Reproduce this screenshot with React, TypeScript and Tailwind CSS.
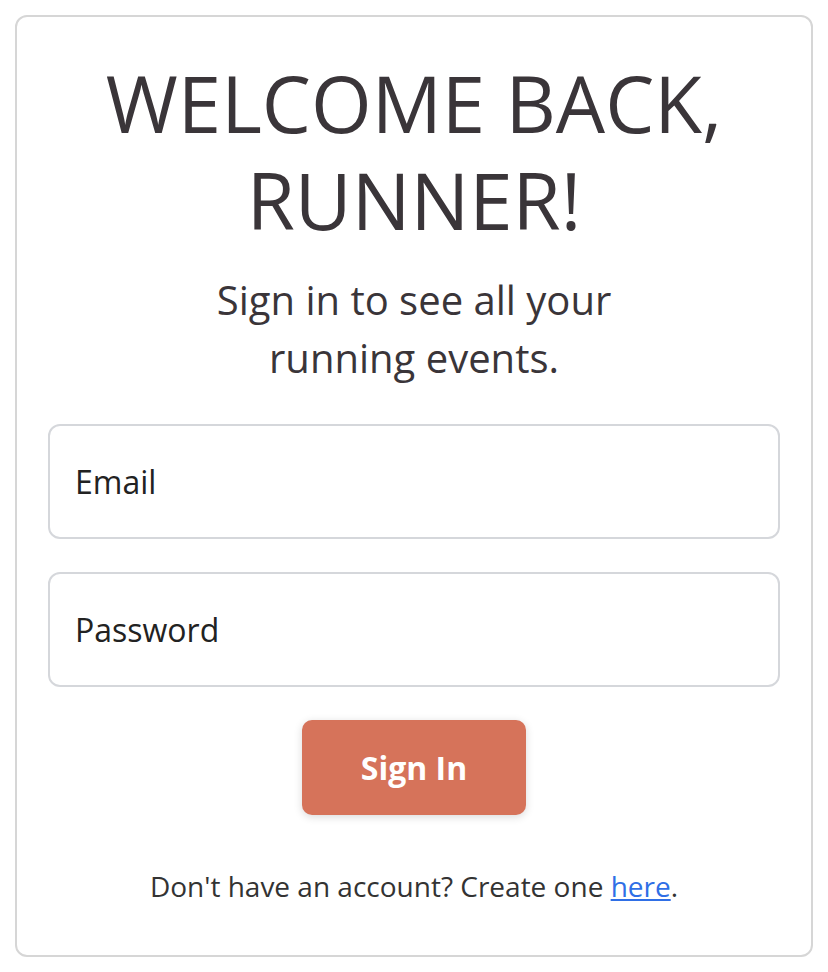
export default function App() {
  return (
    <div className="min-h-screen bg-white p-[15px]" style={{ fontFamily: '"Open Sans", "Noto Sans", sans-serif' }}>
      <div className="flex flex-col items-center rounded-[12px] border-2 border-[#d6d6d6] px-[31px] pt-[38px] pb-[48px]">
        <h1 className="text-center text-[78px] leading-[97px] font-normal text-[#3a3539]">
          WELCOME BACK,
          <br />
          RUNNER!
        </h1>
        <p className="mt-[22px] text-center text-[40px] leading-[58px] text-[#3a3539]">
          Sign in to see all your
          <br />
          running events.
        </p>
        <form className="mt-[37px] flex w-full flex-col items-center">
          <input
            className="h-[115px] w-full rounded-[12px] border-2 border-[#d5d7db] px-[25px] text-[32px] text-[#222] placeholder-[#222] outline-none"
            placeholder="Email"
          />
          <input
            type="password"
            className="mt-[33px] h-[115px] w-full rounded-[12px] border-2 border-[#d5d7db] px-[25px] text-[32px] text-[#222] placeholder-[#222] outline-none"
            placeholder="Password"
          />
          <button
            type="button"
            className="mt-[33px] h-[95px] w-[224px] rounded-[10px] bg-[#d6735a] text-[32px] font-bold text-white shadow-[0_2px_8px_rgba(0,0,0,0.15)]"
          >
            Sign In
          </button>
        </form>
        <p className="mt-[50px] text-center text-[28px] text-[#333]">
          Don't have an account? Create one{" "}
          <a href="#" className="text-[#2f6fe6] underline">
            here
          </a>
          .
        </p>
      </div>
    </div>
  )
}
